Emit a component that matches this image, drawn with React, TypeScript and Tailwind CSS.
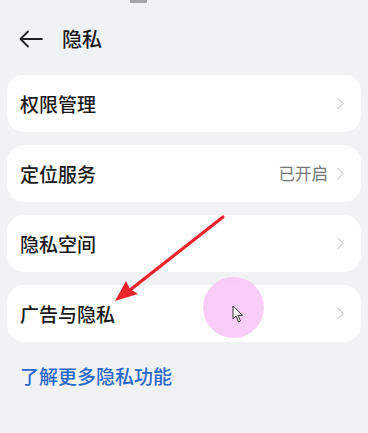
import { ChevronRight } from 'lucide-react';

const items = [
  { label: '权限管理' },
  { label: '定位服务', value: '已开启' },
  { label: '隐私空间' },
  { label: '广告与隐私' },
];

export default function App() {
  return (
    <div
      className="relative w-[368px] h-[433px] overflow-hidden bg-[#f1f2f4] text-[#1a1a1a]"
      style={{ fontFamily: '"Noto Sans CJK SC", "Noto Sans", sans-serif' }}
    >
      {/* status bar remnant */}
      <div className="absolute left-[130px] top-0 w-[17px] h-[3px] rounded-b-[1px] bg-[#a5a5a5]" />

      {/* Header */}
      <div className="flex items-center h-[36px] mt-[21px] pl-[19px]">
        <svg width="24" height="18" viewBox="0 0 24 18" fill="none" stroke="#222" strokeWidth="1.8" strokeLinecap="round" strokeLinejoin="round">
          <path d="M23 9H2M9 1.5L1.5 9L9 16.5" />
        </svg>
        <span className="ml-[19px] text-[20px] font-medium leading-none">隐私</span>
      </div>

      {/* Cards */}
      <div className="flex flex-col gap-[13px] px-[7px] mt-[18px]">
        {items.map(item => (
          <div key={item.label} className="flex items-center h-[57px] rounded-[17px] bg-white pl-[13px] pr-[10px]">
            <span className="flex-1 text-[19px] font-medium leading-none">{item.label}</span>
            {item.value && <span className="text-[16.5px] text-[#777] mr-[2px] leading-none">{item.value}</span>}
            <ChevronRight size={21} strokeWidth={1.2} color="#c4c4c4" />
          </div>
        ))}
      </div>

      <div className="mt-[24px] pl-[20px] text-[19px] font-medium text-[#2868cc] leading-none">了解更多隐私功能</div>

      {/* Touch indicator */}
      <div className="absolute left-[203px] top-[277px] w-[61px] h-[61px] rounded-full bg-[#f8c8f6]/90" />
      <svg className="absolute left-[232px] top-[305px]" width="14" height="19" viewBox="0 0 14 19">
        <path d="M1 1 L1 14 L4 11 L6.5 17 L8.5 16 L6 10.3 L10.5 10.3 Z" fill="#fff" stroke="#333" strokeWidth="1" strokeLinejoin="round" />
      </svg>

      {/* Red arrow */}
      <svg className="absolute left-0 top-0 pointer-events-none" width="368" height="433" viewBox="0 0 368 433">
        <line x1="223" y1="217" x2="130" y2="290" stroke="#e9232b" strokeWidth="3.2" strokeLinecap="round" />
        <path d="M115 301 L126 281 L130 289 L138 294 Z" fill="#e9232b" />
      </svg>
    </div>
  );
}
